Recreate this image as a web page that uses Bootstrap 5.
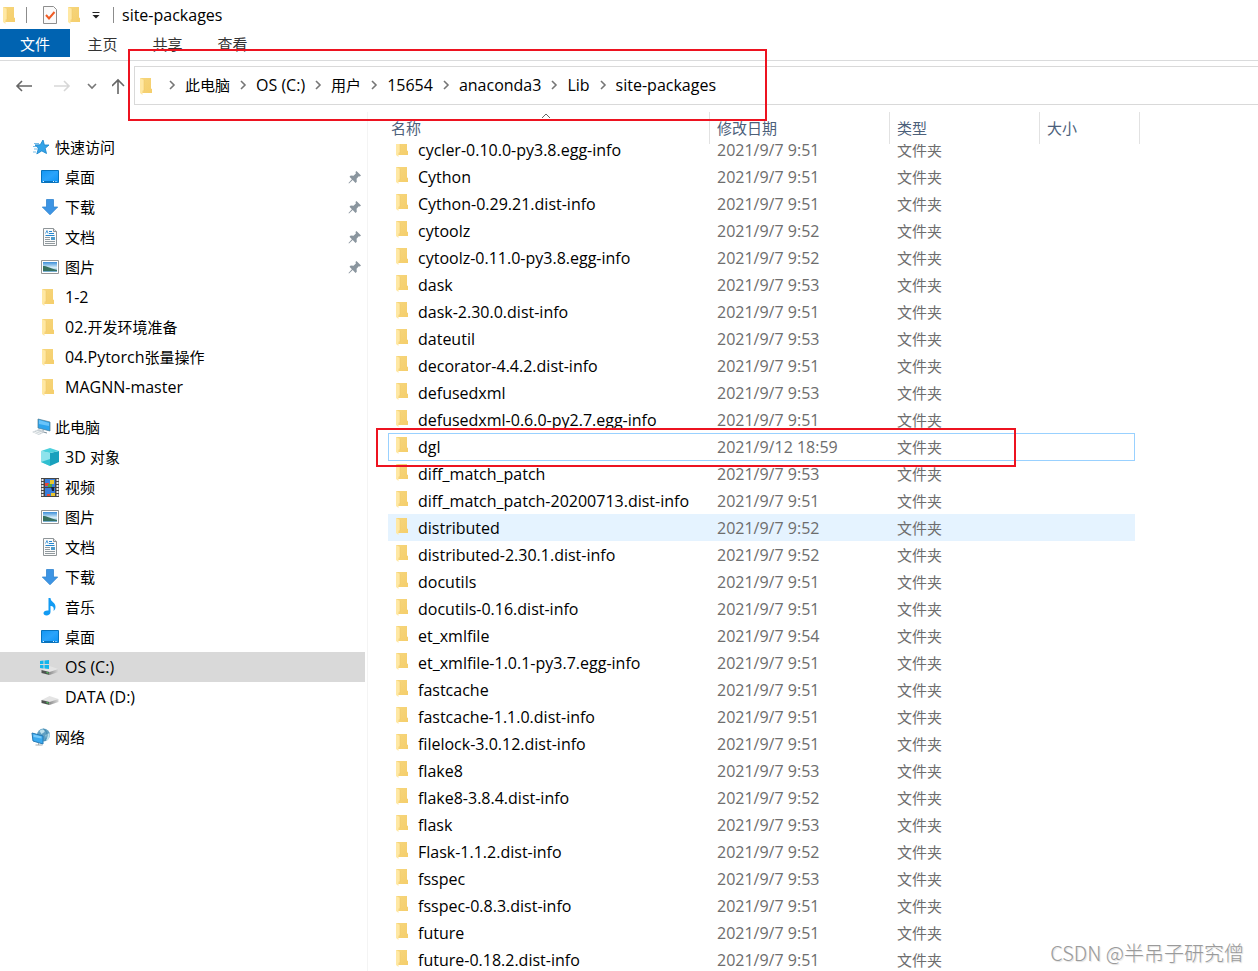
<!DOCTYPE html>
<html lang="zh-CN">
<head>
<meta charset="utf-8">
<meta name="viewport" content="width=device-width, initial-scale=1">
<title>site-packages</title>
<link href="https://cdn.jsdelivr.net/npm/bootstrap@5.3.0/dist/css/bootstrap.min.css" rel="stylesheet">
<style>
  body { font-family: "Open Sans", "Noto Sans CJK SC", sans-serif; font-size: 16px; line-height: 24px; color: #000; background: #fff; }
  a { color: inherit; text-decoration: none; }
  button { border: 0; background: none; padding: 0; color: inherit; }
  svg { display: block; flex: none; }
  .zh { font-family: "Noto Sans CJK SC", sans-serif; font-size: 15px; }
  .titlebar { height: 29px; padding-left: 2px; }
  .bar-line { width: 1px; height: 16px; background: #8c8c8c; }
  .tools { gap: 8px; padding: 0 12px; }
  .ribbon { height: 32px; border-bottom: 1px solid #dadbdc; color: #333; }
  .ribbon button { height: 28px; width: 65px; padding-top: 2px; }
  .ribbon .file-tab { width: 70px; background: #0063b1; color: #fff; }
  .nav-row { height: 51px; padding-top: 5px; }
  .nav-buttons { width: 134px; height: 40px; padding-left: 14px; gap: 14px; }
  .address { height: 39px; border: 1px solid #d9d9d9; border-right: 0; padding-left: 4px; }
  .address ol { list-style: none; padding: 0 0 2px; }
  .address .chev { width: 26px; display: flex; justify-content: center; }
  .mark-box { position: absolute; border: 2px solid #ed1320; pointer-events: none; z-index: 3; }
  .mark-address { left: -7px; top: -18px; width: 639px; height: 72px; }
  .mark-row { left: -12px; top: -5px; width: 640px; height: 39px; }
  .tree { width: 368px; border-right: 1px solid #f4f4f4; padding-top: 20px; }
  .tree a { height: 30px; width: 365px; }
  .tree .top { padding-left: 31px; gap: 4px; }
  .tree .sub { padding-left: 40px; gap: 5px; }
  .tree .section-gap { margin-top: 10px; }
  .tree .active-item { background: #d9d9d9; }
  .tree .pin { margin-left: auto; margin-right: 3px; }
  .files { padding-left: 20px; }
  .files table { table-layout: fixed; width: 747px; border-collapse: separate; border-spacing: 0; }
  .files th { height: 24px; padding: 0; font-weight: 400; vertical-align: top; }
  .files th button { position: relative; z-index: 1; display: block; width: 100%; height: 32px; margin-bottom: -8px; padding-left: 7px; text-align: left; background: #fff; border-right: 1px solid #e2e2e2; color: #4c607a; }
  .files th:first-child button { padding-left: 3px; }
  .files th:last-child button { width: 100px; }
  .sort-mark { position: absolute; left: 153px; top: 0; }
  .files td { height: 27px; padding: 0 0 0 7px; color: #6d6d6d; white-space: nowrap; position: relative; }
  .files td a { color: #000; gap: 5px; }
  .files .hovered td { background: #e5f3ff; }
  .focus-line { position: absolute; left: 0; top: 0; width: 747px; height: 28px; border: 1px solid #99d1ff; }
  .watermark { position: absolute; right: 14px; bottom: 4px; font-family: "Noto Sans CJK SC", sans-serif; font-size: 20px; font-weight: 300; line-height: 28px; color: #9a9a9a; text-shadow: 1px 1px 1px #ddd; }
</style>
</head>
<body>
<svg width="0" height="0" class="position-absolute" aria-hidden="true">
  <defs>
    <linearGradient id="gFold" x1="0" y1="0" x2="1" y2="1"><stop offset="0" stop-color="#f6d67d"/><stop offset="1" stop-color="#f5ce6b"/></linearGradient>
    <linearGradient id="gBlue" x1="0" y1="0" x2="1" y2="1"><stop offset="0" stop-color="#1296f3"/><stop offset=".5" stop-color="#2ba4fb"/><stop offset="1" stop-color="#0b93f5"/></linearGradient>
    <linearGradient id="gSky" x1="0" y1="0" x2="0" y2="1"><stop offset="0" stop-color="#3c8ed8"/><stop offset=".55" stop-color="#d5ecf8"/><stop offset="1" stop-color="#6ea8cc"/></linearGradient>
    <linearGradient id="gDisk" x1="0" y1="0" x2="1" y2="0"><stop offset="0" stop-color="#8e8e8e"/><stop offset="1" stop-color="#d9d9d9"/></linearGradient>
    <symbol id="folder" viewBox="0 0 18 18"><path d="M3 1h11v10.500l1 .5v4H4z" fill="url(#gFold)"/><path d="M3 1l4 2v11l-1.500.5V18L3 16z" fill="#ffe8a3"/><path d="M5.500 14l1.500-.5V3" fill="none" stroke="#edc565" stroke-width=".5"/></symbol>
    <symbol id="star" viewBox="0 0 18 18"><path d="M11 2l1.400 5H17l-3.800 3.300 1.300 5.200-4.700-2.600-5 3 1.700-5.600L3 6.900l5.200-.1z" fill="#35a4e8" stroke="#1583ca" stroke-width=".8"/><path d="M2 5.500h5M1 8.500h3M2 11h4M1 14h3" stroke="#74bce9"/></symbol>
    <symbol id="desktop" viewBox="0 0 18 18"><path d="M.5 2.500h17v12H.5z" fill="url(#gBlue)" stroke="#0873bd"/><path d="M2 13.500h12" stroke="#0873bd"/><path d="M2 13.500h1M12 13.500h1M14.500 13.500h1" stroke="#e1f4ff"/></symbol>
    <symbol id="down" viewBox="0 0 18 18"><path d="M5.500 1.500h7v7.500h4.200L9 16.800 1.300 9h4.200z" fill="#3c94e4" stroke="#3185d1" stroke-width=".8"/></symbol>
    <symbol id="doc" viewBox="0 0 18 18"><path d="M2.500.5h10l3 3v14h-13z" fill="#fbfbfb" stroke="#8f9598"/><path d="M12.500.5v3h3" fill="#e4e4e4" stroke="#8f9598"/><path d="M8 3.500h3M8 5.500h5M4.500 7.500h9" stroke="#2587cf"/><path d="M4.500 5.500L6 2.500l1 3" fill="none" stroke="#2587cf" stroke-width=".8"/><path d="M4 9.500h5M4 11.500h5M4 13.500h10M4 15.500h10" stroke="#919a9f"/><path d="M10 9h4v3h-4z" fill="#4f9bcb"/></symbol>
    <symbol id="picture" viewBox="0 0 18 18"><path d="M.5 2.500h17v13H.5z" fill="#fff" stroke="#979797"/><path d="M2 4h14v10H2z" fill="url(#gSky)"/><path d="M2 8c4 0 6 2 14 4v1H2z" fill="#38715f"/></symbol>
    <symbol id="pc" viewBox="0 0 20 18"><path d="M7 1l12 3v9L7 10z" fill="#2da4ed" stroke="#477990" stroke-width=".7"/><path d="M8 2l10 3v3L8 6z" fill="#69c4fa"/><path d="M12 12v2l4 1" fill="none" stroke="#7a8d99"/><path d="M1 14l7-3 6 3-6 3z" fill="#c8d0d5"/><path d="M3 14l6 2M5 13l6 2" stroke="#fff" stroke-width=".7"/></symbol>
    <symbol id="cube" viewBox="0 0 18 18"><path d="M0 3l9 2v13l-9-4z" fill="#8ee3ec"/><path d="M0 14l9-3v7z" fill="#30bfd0"/><path d="M9 5l9-2v11l-9 4z" fill="#18a1bd"/><path d="M0 3l9-3 9 3-9 2z" fill="#4bd0dc"/></symbol>
    <symbol id="film" viewBox="0 0 18 19"><path d="M0 0h18v19H0z" fill="#454545"/><path d="M1.500 1v18M16.500 1v18" stroke="#eee" stroke-width="2" stroke-dasharray="2 1"/><path d="M4 1h10v8H4zM4 10h10v8H4z" fill="#397edc"/><path d="M4 5h4v3H4zM6 16h3v2H6z" fill="#e64738"/><path d="M9 2h4v4H9zM10 15h4v3h-4z" fill="#e9c62e"/><path d="M7 6h4v3H7z" fill="#50a53c"/><path d="M10 9h3v4h-2z" fill="#182441"/></symbol>
    <symbol id="music" viewBox="0 0 18 18"><path d="M7.500 0h2c0 4 5 4 5 9 0 2-1 3-2 4 1-4-1-5-3-5v6c0 2-2 3.500-4 3.500S2.500 16.500 2.500 15s2-3 5-2.500z" fill="#129bf3"/></symbol>
    <symbol id="disk" viewBox="0 0 19 18"><path d="M1 12l8-4 9 3-9 4z" fill="#e4e4e4"/><path d="M1 12l8 2v3l-8-2z" fill="#4e5250"/><path d="M9 14l9-3v3l-9 3z" fill="url(#gDisk)"/><path d="M6 14.500l2 .6" stroke="#4be05b"/></symbol>
    <symbol id="winflag" viewBox="0 0 9 9"><path d="M0 1l3.500-.5V4H0zM4.500.4L9 0v4H4.500zM0 5h3.500v3.500L0 8zM4.500 5H9v4l-4.500-.5z" fill="#12b5ec"/></symbol>
    <symbol id="network" viewBox="0 0 19 18"><circle cx="12" cy="7" r="6.500" fill="#5f9fc2"/><path d="M8 3c3-3 6-1 5 1l-3 2zM14 7l4-2c1 4-1 7-3 8z" fill="#c0e1ec"/><path d="M12 1c4 2 5 8 1 12" fill="none" stroke="#438ab0"/><path d="M.5 5l11 3v8L1.500 13z" fill="#39a9ef" stroke="#267ab5"/><path d="M2 6.500l8 2v2L2 9z" fill="#79cbfa"/><path d="M7 15v2M4 17h7" stroke="#a2adb2"/></symbol>
    <symbol id="pin" viewBox="0 0 14 14"><path d="M8.500 1L13 5.500l-1.200 1-1-.2-2.200 2.400.2 3-1.300 1.200-2.800-2.800L1 13.500l-.5-.5 3.400-3.700L1.500 6.800l1.200-1.200 2.800.2L7.900 3.500 7.500 2z" fill="#8a959e"/></symbol>
    <symbol id="chevron" viewBox="0 0 8 10"><path d="M2 1l4 4-4 4" fill="none" stroke="#767676" stroke-width="1.600"/></symbol>
  </defs>
</svg>

<div class="vh-100 d-flex flex-column overflow-hidden position-relative">
  <header>
    <div class="titlebar d-flex align-items-center">
      <svg width="16" height="18" class="me-2" viewBox="2 0 16 18"><use href="#folder" width="18" height="18"/></svg>
      <span class="bar-line"></span>
      <div class="tools d-flex align-items-center">
        <button class="ms-1" aria-label="属性"><svg width="14" height="18" viewBox="0 0 14 18"><path d="M.5.500h10l3 3v14H.5z" fill="#fafafa" stroke="#8e8e8e"/><path d="M3 9l3 3.500L11.500 6" fill="none" stroke="#ef5b24" stroke-width="2"/></svg></button>
        <button aria-label="新建文件夹"><svg width="18" height="18"><use href="#folder"/></svg></button>
        <button aria-label="自定义快速访问工具栏"><svg width="10" height="8" viewBox="0 0 10 8"><path d="M1.500 1.500h7" stroke="#222"/><path d="M1.500 4h7L5 7.500z" fill="#222"/></svg></button>
      </div>
      <span class="bar-line me-2"></span>
      <span>site-packages</span>
    </div>
    <div class="ribbon d-flex zh">
      <button class="file-tab">文件</button>
      <button>主页</button>
      <button>共享</button>
      <button>查看</button>
    </div>
    <div class="nav-row d-flex align-items-start">
      <div class="nav-buttons d-flex align-items-center flex-shrink-0">
        <button aria-label="后退"><svg width="20" height="16" viewBox="0 0 20 16"><path d="M18 8H3M8 3L3 8l5 5" fill="none" stroke="#666" stroke-width="1.600"/></svg></button>
        <button aria-label="前进"><svg width="24" height="16" viewBox="0 0 24 16"><path d="M6 8h15M16 3l5 5-5 5" fill="none" stroke="#d7d7d7" stroke-width="1.600"/></svg></button>
        <button aria-label="最近浏览的位置"><svg width="12" height="8" viewBox="0 0 12 8"><path d="M2 2l4 4 4-4" fill="none" stroke="#777" stroke-width="1.600"/></svg></button>
        <button aria-label="上移"><svg width="14" height="18" viewBox="0 0 14 18"><path d="M6 17V3M0 9l6-6 6 6" fill="none" stroke="#666" stroke-width="1.600"/></svg></button>
      </div>
      <nav class="address flex-grow-1 position-relative d-flex align-items-center" aria-label="地址">
        <svg width="16" height="18" viewBox="2 0 16 18"><use href="#folder" width="18" height="18"/></svg>
        <ol class="d-flex align-items-center m-0">
          <li class="d-flex align-items-center"><span class="chev ms-1"><svg width="8" height="10"><use href="#chevron"/></svg></span><a href="#" class="zh">此电脑</a></li>
          <li class="d-flex align-items-center"><span class="chev"><svg width="8" height="10"><use href="#chevron"/></svg></span><a href="#">OS (C:)</a></li>
          <li class="d-flex align-items-center"><span class="chev"><svg width="8" height="10"><use href="#chevron"/></svg></span><a href="#" class="zh">用户</a></li>
          <li class="d-flex align-items-center"><span class="chev"><svg width="8" height="10"><use href="#chevron"/></svg></span><a href="#">15654</a></li>
          <li class="d-flex align-items-center"><span class="chev"><svg width="8" height="10"><use href="#chevron"/></svg></span><a href="#">anaconda3</a></li>
          <li class="d-flex align-items-center"><span class="chev"><svg width="8" height="10"><use href="#chevron"/></svg></span><a href="#">Lib</a></li>
          <li class="d-flex align-items-center"><span class="chev"><svg width="8" height="10"><use href="#chevron"/></svg></span><a href="#">site-packages</a></li>
        </ol>
        <div class="mark-box mark-address"></div>
      </nav>
    </div>
  </header>

  <div class="d-flex flex-grow-1 overflow-hidden">
    <nav class="tree flex-shrink-0" aria-label="导航窗格">
      <a href="#" class="top d-flex align-items-center"><svg width="20" height="18"><use href="#star"/></svg><span class="zh">快速访问</span></a>
      <a href="#" class="sub d-flex align-items-center"><svg width="20" height="18"><use href="#desktop"/></svg><span class="zh">桌面</span><svg width="14" height="14" class="pin"><use href="#pin"/></svg></a>
      <a href="#" class="sub d-flex align-items-center"><svg width="20" height="18"><use href="#down"/></svg><span class="zh">下载</span><svg width="14" height="14" class="pin"><use href="#pin"/></svg></a>
      <a href="#" class="sub d-flex align-items-center"><svg width="20" height="18"><use href="#doc"/></svg><span class="zh">文档</span><svg width="14" height="14" class="pin"><use href="#pin"/></svg></a>
      <a href="#" class="sub d-flex align-items-center"><svg width="20" height="18"><use href="#picture"/></svg><span class="zh">图片</span><svg width="14" height="14" class="pin"><use href="#pin"/></svg></a>
      <a href="#" class="sub d-flex align-items-center"><svg width="20" height="18" viewBox="1 0 20 18"><use href="#folder" width="18" height="18"/></svg><span>1-2</span></a>
      <a href="#" class="sub d-flex align-items-center"><svg width="20" height="18" viewBox="1 0 20 18"><use href="#folder" width="18" height="18"/></svg><span>02.<span class="zh">开发环境准备</span></span></a>
      <a href="#" class="sub d-flex align-items-center"><svg width="20" height="18" viewBox="1 0 20 18"><use href="#folder" width="18" height="18"/></svg><span>04.Pytorch<span class="zh">张量操作</span></span></a>
      <a href="#" class="sub d-flex align-items-center"><svg width="20" height="18" viewBox="1 0 20 18"><use href="#folder" width="18" height="18"/></svg><span>MAGNN-master</span></a>
      <a href="#" class="top section-gap d-flex align-items-center"><svg width="20" height="18"><use href="#pc"/></svg><span class="zh">此电脑</span></a>
      <a href="#" class="sub d-flex align-items-center"><svg width="20" height="18"><use href="#cube"/></svg><span>3D <span class="zh">对象</span></span></a>
      <a href="#" class="sub d-flex align-items-center"><svg width="20" height="19"><use href="#film"/></svg><span class="zh">视频</span></a>
      <a href="#" class="sub d-flex align-items-center"><svg width="20" height="18"><use href="#picture"/></svg><span class="zh">图片</span></a>
      <a href="#" class="sub d-flex align-items-center"><svg width="20" height="18"><use href="#doc"/></svg><span class="zh">文档</span></a>
      <a href="#" class="sub d-flex align-items-center"><svg width="20" height="18"><use href="#down"/></svg><span class="zh">下载</span></a>
      <a href="#" class="sub d-flex align-items-center"><svg width="20" height="18"><use href="#music"/></svg><span class="zh">音乐</span></a>
      <a href="#" class="sub d-flex align-items-center"><svg width="20" height="18"><use href="#desktop"/></svg><span class="zh">桌面</span></a>
      <a href="#" class="sub d-flex align-items-center active-item"><svg width="20" height="18"><use href="#disk"/><use href="#winflag" width="9" height="9" y="2"/></svg><span>OS (C:)</span></a>
      <a href="#" class="sub d-flex align-items-center"><svg width="20" height="18"><use href="#disk"/></svg><span>DATA (D:)</span></a>
      <a href="#" class="top section-gap d-flex align-items-center"><svg width="20" height="18"><use href="#network"/></svg><span class="zh">网络</span></a>
    </nav>

    <main class="files flex-grow-1">
      <table>
        <colgroup><col width="322"><col width="180"><col width="150"><col width="95"></colgroup>
        <thead>
          <tr>
            <th scope="col"><button class="zh">名称<svg class="sort-mark" width="10" height="7" viewBox="0 0 10 7"><path d="M1 6l4-4 4 4" fill="none" stroke="#666"/></svg></button></th>
            <th scope="col"><button class="zh">修改日期</button></th>
            <th scope="col"><button class="zh">类型</button></th>
            <th scope="col"><button class="zh">大小</button></th>
          </tr>
        </thead>
        <tbody id="rows"></tbody>
      </table>
    </main>
  </div>
  <div class="watermark">CSDN @半吊子研究僧</div>
</div>

<script src="https://cdn.jsdelivr.net/npm/bootstrap@5.3.0/dist/js/bootstrap.bundle.min.js"></script>
<script>
  const files = [
    ['cycler-0.10.0-py3.8.egg-info', '7 9:51'], ['Cython', '7 9:51'], ['Cython-0.29.21.dist-info', '7 9:51'],
    ['cytoolz', '7 9:52'], ['cytoolz-0.11.0-py3.8.egg-info', '7 9:52'], ['dask', '7 9:53'],
    ['dask-2.30.0.dist-info', '7 9:51'], ['dateutil', '7 9:53'], ['decorator-4.4.2.dist-info', '7 9:51'],
    ['defusedxml', '7 9:53'], ['defusedxml-0.6.0-py2.7.egg-info', '7 9:51'], ['dgl', '12 18:59', 'focused'],
    ['diff_match_patch', '7 9:53'], ['diff_match_patch-20200713.dist-info', '7 9:51'], ['distributed', '7 9:52', 'hovered'],
    ['distributed-2.30.1.dist-info', '7 9:52'], ['docutils', '7 9:51'], ['docutils-0.16.dist-info', '7 9:51'],
    ['et_xmlfile', '7 9:54'], ['et_xmlfile-1.0.1-py3.7.egg-info', '7 9:51'], ['fastcache', '7 9:51'],
    ['fastcache-1.1.0.dist-info', '7 9:51'], ['filelock-3.0.12.dist-info', '7 9:51'], ['flake8', '7 9:53'],
    ['flake8-3.8.4.dist-info', '7 9:52'], ['flask', '7 9:53'], ['Flask-1.1.2.dist-info', '7 9:52'],
    ['fsspec', '7 9:53'], ['fsspec-0.8.3.dist-info', '7 9:51'], ['future', '7 9:51'], ['future-0.18.2.dist-info', '7 9:51']
  ];
  document.getElementById('rows').innerHTML = files.map(([name, date, state = '']) => `
    <tr class="${state}">
      <td>${state === 'focused' ? '<div class="focus-line"></div><div class="mark-box mark-row"></div>' : ''}<a href="#" class="d-flex align-items-center"><svg width="18" height="18" viewBox="2 0 18 18" class="mb-1"><use href="#folder" width="18" height="18"/></svg><span>${name}</span></a></td>
      <td>2021/9/${date}</td><td class="zh">文件夹</td><td></td>
    </tr>`).join('');
</script>
</body>
</html>
